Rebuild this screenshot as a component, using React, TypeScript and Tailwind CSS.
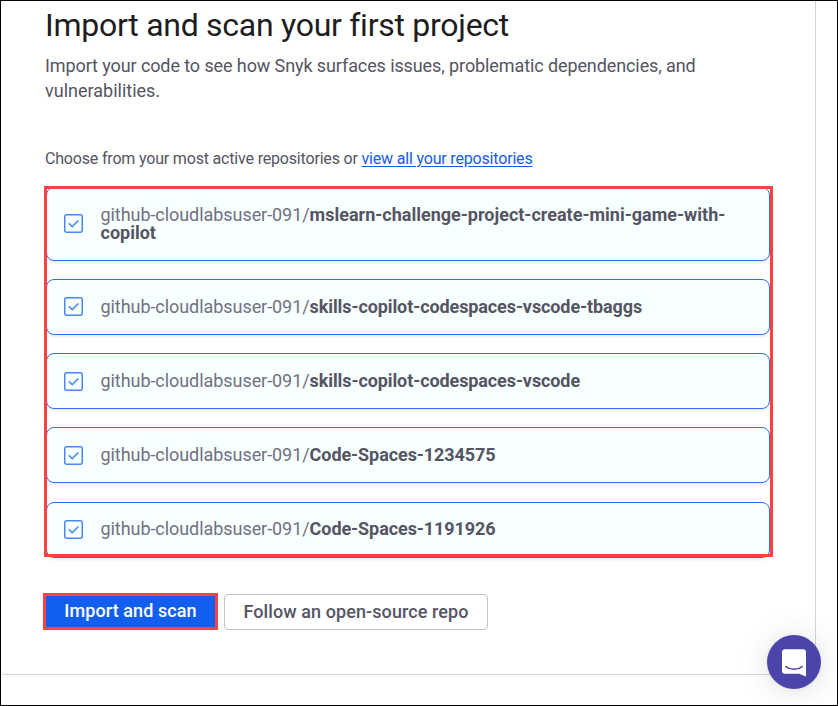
const repositories = [
  { name: "mslearn-challenge-project-create-mini-game-with-copilot", height: "h-[73.6px]", text: "tracking-normal", pad: "pb-0" },
  { name: "skills-copilot-codespaces-vscode-tbaggs", height: "h-[56px]", text: "tracking-[-0.1px]", pad: "pb-0" },
  { name: "skills-copilot-codespaces-vscode", height: "h-[56px]", text: "tracking-[-0.1px]", pad: "pb-px" },
  { name: "Code-Spaces-1234575", height: "h-[56px]", text: "tracking-[-0.08px]", pad: "pb-px" },
  { name: "Code-Spaces-1191926", height: "h-[56px]", text: "tracking-[-0.08px]", pad: "pb-px" },
];

function Checkbox() {
  return (
    <svg className="shrink-0" width="19" height="19" viewBox="0 0 19 19" fill="none" stroke="#4b87f4">
      <rect x="0.75" y="0.75" width="17.5" height="17.5" rx="2" strokeWidth="1.5" />
      <path d="M4.800 9.2 8.200 12.6 14.400 6.5" strokeWidth="1.5" />
    </svg>
  );
}

export default function App() {
  return (
    <main className="relative h-[706px] w-[838px] overflow-hidden border border-black bg-white font-[Roboto,sans-serif] text-[#555463]">
      <section className="h-[674px] w-[815px] rounded-bl-[4px] border-r border-b border-[#d3d3d9] pl-[42px]">
        <h1 className="h-[51px] pt-[4px] pl-[2px] text-[32px] leading-[40px] whitespace-nowrap text-[#1c1c21]">
          <span className="tracking-[-0.27px]">Import and scan your first project</span>
        </h1>
        <p className="h-[98px] pt-px pl-[2px] text-[18px] leading-[25px] whitespace-nowrap">
          <span className="tracking-[-0.1px]">Import your code to see how Snyk surfaces issues, problematic dependencies, and</span>
          <br />
          <span>vulnerabilities.</span>
        </p>
        <p className="h-[36px] pl-[2px] text-[16px] leading-[18px] whitespace-nowrap">
          <span className="tracking-[-0.18px]">Choose from your most active repositories or </span>
          <a className="tracking-[-0.18px] text-[#145deb] underline underline-offset-2" href="#repositories">view all your repositories</a>
        </p>
        <div className="relative ml-px h-[371px] w-[729px]">
          <ul className="flex flex-col gap-[18.3px] pt-px pl-[2px]">
            {repositories.map((repo) => (
              <li key={repo.name} className={`${repo.height} flex w-[724px] items-center gap-[17.5px] rounded-[8px] border border-[#2f70ee] bg-[#f7ffff] pl-[17px] shadow-[0_2px_3px_rgba(0,0,0,0.08)]`}>
                <Checkbox />
                <span className={`w-[640px] text-[18px] leading-[18px] ${repo.pad}`}>
                  <span className="tracking-[-0.06px] text-[#727082]">github-cloudlabsuser-091/</span>
                  <b className={`font-bold ${repo.text}`}>{repo.name}</b>
                </span>
              </li>
            ))}
          </ul>
          <div className="pointer-events-none absolute inset-0 border-[3px] border-[#ff4141]" />
        </div>
        <div className="flex gap-[6px] pt-[36px] text-[18px] font-medium">
          <button className="h-[37px] w-[175px] border-[3px] border-[#ff4141] bg-[#125eef] pb-[2px] text-white"><span className="tracking-[0.08px]">Import and scan</span></button>
          <button className="mt-px h-[36px] w-[264px] rounded-[4px] border border-[#c4c4cb] pb-[2px]"><span className="tracking-[0.09px]">Follow an open-source repo</span></button>
        </div>
      </section>
      <button aria-label="Open chat" className="absolute top-[634px] left-[766px] flex h-[54px] w-[54px] items-center justify-center rounded-full bg-[#4b45aa] shadow-[0_1px_6px_rgba(0,0,0,0.06),0_2px_32px_rgba(0,0,0,0.12)]">
        <svg width="26" height="30" viewBox="0 0 26 30" fill="none">
          <path d="M4 2.200h18a3 3 0 0 1 3 3v24.200l-6.800-2.700H4a3 3 0 0 1-3-3V5.200a3 3 0 0 1 3-3Z" fill="white" />
          <path d="M4.800 19.600c4.800 3.600 11.700 3.600 16.500 0" stroke="#4b45aa" strokeWidth="1.500" strokeLinecap="round" />
        </svg>
      </button>
    </main>
  );
}
